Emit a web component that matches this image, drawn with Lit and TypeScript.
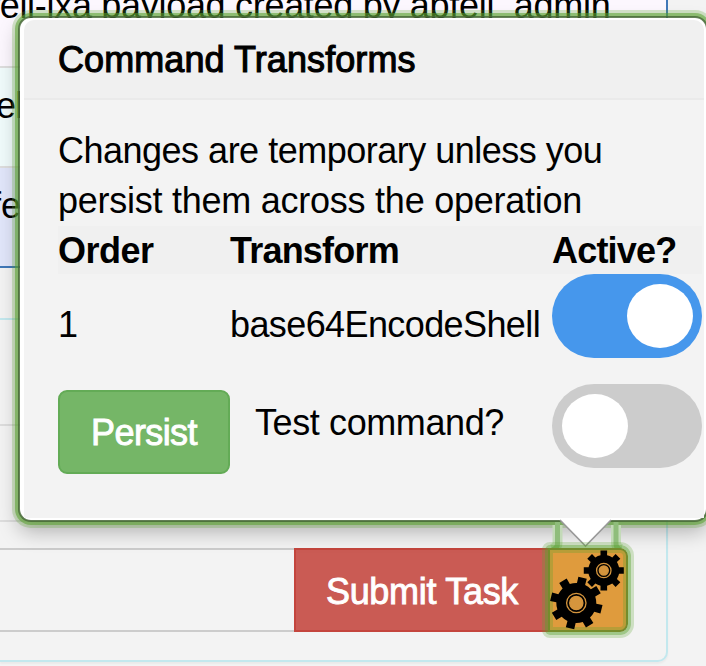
import { LitElement, html, css, svg } from "lit";
import { customElement, property } from "lit/decorators.js";

function gearPath(cx: number, cy: number, outer: number, root: number, teeth: number, start: number): string {
  const step = (Math.PI * 2) / teeth;
  const pt = (r: number, a: number) => `${(cx + r * Math.cos(a)).toFixed(2)} ${(cy + r * Math.sin(a)).toFixed(2)}`;
  let d = "";
  for (let i = 0; i < teeth; i++) {
    const a = (start * Math.PI) / 180 + i * step;
    d += `${i ? "L" : "M"}${pt(root, a - step * 0.27)}L${pt(outer, a - step * 0.21)}L${pt(outer, a + step * 0.21)}L${pt(root, a + step * 0.27)}`;
    d += `A${root} ${root} 0 0 1 ${pt(root, a + step * 0.73)}`;
  }
  return d + "Z";
}

@customElement("toggle-switch")
class ToggleSwitch extends LitElement {
  @property({ type: Boolean, reflect: true }) on = false;
  static styles = css`
    :host { display: flex; box-sizing: border-box; width: 150px; height: 84px; border-radius: 42px; background: #ccc; padding: 10px; }
    :host([on]) { background: #4697ec; justify-content: flex-end; padding-right: 9px; }
    .knob { width: 66px; height: 64px; border-radius: 50%; background: #fff; }
  `;
  render() { return html`<div class="knob"></div>`; }
}

@customElement("transforms-popover")
class TransformsPopover extends LitElement {
  static styles = css`
    :host { display: block; box-sizing: border-box; width: 690px; height: 506px; border: 2px solid rgba(70, 104, 54, .82); border-radius: 13px; background: #fff; background-clip: padding-box; padding: 2px 2px 2px 4px; font-size: 36px; line-height: 50px;
      box-shadow: 0 0 0 3px rgba(90, 163, 47, .55), 0 0 0 6px rgba(90, 163, 47, .25), 0 10px 20px rgba(0, 0, 0, .27); }
    .title { box-sizing: border-box; height: 80px; margin: 0; padding: 15px 34px; background: #f0f0f0; border-bottom: 2px solid #eaeaea; border-radius: 10px 10px 0 0; font-size: 36px; font-weight: 400; letter-spacing: .08px; -webkit-text-stroke: 1.1px #000; white-space: nowrap; }
    .body { box-sizing: border-box; height: 418px; padding: 26px 0 0 34px; background: #f3f3f3; }
    .line { white-space: nowrap; letter-spacing: -.5px; }
    .line.second { letter-spacing: -.25px; }
    .grid, .actions { display: grid; grid-template-columns: 172px 322px 150px; }
    .head { display: contents; font-weight: 700; letter-spacing: -.8px; }
    .head span { background: #f0f0f0; height: 48px; }
    .head span:first-child { letter-spacing: -.5px; }
    .cell { padding-top: 26px; letter-spacing: -.6px; }
    .actions { margin-top: 26px; }
    .persist { box-sizing: border-box; margin-top: 6px; height: 84px; border: 2px solid #63ab56; border-radius: 9px; background: #75b667; color: #fff; text-align: center; line-height: 82px; letter-spacing: -.6px; -webkit-text-stroke: .9px #fff; }
    .test { padding: 14px 0 0 25px; white-space: nowrap; letter-spacing: -.4px; }
  `;
  render() {
    return html`
      <h3 class="title"><span>Command Transforms</span></h3>
      <div class="body">
        <div class="line">Changes are temporary unless you</div>
        <div class="line second">persist them across the operation</div>
        <div class="grid">
          <div class="head"><span>Order</span><span>Transform</span><span>Active?</span></div>
          <div class="cell">1</div><div class="cell">base64EncodeShell</div><toggle-switch on></toggle-switch>
        </div>
        <div class="actions">
          <div class="persist">Persist</div><div class="test">Test command?</div><toggle-switch></toggle-switch>
        </div>
      </div>`;
  }
}

@customElement("app-root")
class AppRoot extends LitElement {
  static styles = css`
    :host { display: block; position: relative; width: 706px; height: 666px; overflow: hidden; background: #f3f3f3; color: #000; font-family: "Liberation Sans", Arial, sans-serif; font-size: 36px; line-height: 50px; }
    .page { display: flex; flex-direction: column; width: 668px; }
    .row { box-sizing: border-box; border-right: 2px solid #4078b8; border-bottom: 2px solid #ddd; white-space: nowrap; overflow: hidden; }
    .r1 { height: 68px; background: #fcf7fe; }
    .r2 { height: 100px; background: #f0fbfb; }
    .r3 { height: 100px; background: #e1e6fa; border-bottom-color: #4078b8; }
    .r1 div { margin: -19px 0 0 -10px; letter-spacing: -.3px; }
    .r2 div { margin: 13px 0 0 -4px; letter-spacing: -.8px; }
    .r3 div { margin: 13px 0 0 -9px; }
    .panel { box-sizing: border-box; height: 344px; margin-top: 50px; border: 2px solid #c3e8ee; border-left: 0; border-radius: 0 0 10px 0; box-shadow: 0 2px 2px rgba(0, 0, 0, .04); }
    .strip { box-sizing: border-box; height: 106px; border-bottom: 2px solid #ddd; }
    .strip.second { height: 96px; }
    .task { display: flex; height: 84px; margin-top: 26px; }
    .input { box-sizing: border-box; width: 294px; border: 2px solid #ccc; border-width: 2px 0; }
    .submit { box-sizing: border-box; width: 254px; border: 2px solid #c4453d; border-right: 0; background: #ca5b54; color: #fff; line-height: 84px; text-align: center; letter-spacing: -.3px; -webkit-text-stroke: .9px #fff; }
    .gears { box-sizing: border-box; width: 80px; border: 2px solid #758c2c; border-radius: 0 8px 8px 0; background: #df9b3d; box-shadow: inset 0 0 0 3px rgba(110, 160, 50, .35); position: relative; z-index: 5; }
    .gears::before, .gears::after { content: ""; position: absolute; inset: -5px; border: 3px solid rgba(90, 163, 47, .55); border-radius: 5px 11px 11px 5px; }
    .gears::after { inset: -8px; border-color: rgba(90, 163, 47, .25); border-radius: 8px 14px 14px 8px; }
    .gears svg { display: block; width: 76px; height: 80px; }
    transforms-popover { position: absolute; left: 18px; top: 16px; z-index: 2; }
    .arrow { position: absolute; left: 540px; top: 518px; width: 92px; height: 34px; z-index: 4; }
  `;
  render() {
    return html`
      <div class="page">
        <div class="row r1"><div>fell-lxa payload created by apfell_admin</div></div>
        <div class="row r2"><div>ell</div></div>
        <div class="row r3"><div>fe</div></div>
        <div class="panel">
          <div class="strip"></div>
          <div class="strip second"></div>
          <div class="task">
            <div class="input"></div>
            <div class="submit">Submit Task</div>
            <div class="gears">
              <svg viewBox="550 550 76 80">
                ${svg`<path d=${gearPath(603.8, 570.5, 20.3, 15.6, 8, 0)} /><path d=${gearPath(576.3, 603, 26.3, 20, 8, 14)} />`}
                <g fill="none" stroke="#d5953d" stroke-width="1.3">
                  <circle cx="603.8" cy="570.5" r="7.2" /><circle cx="603.8" cy="570.5" r="4.5" fill="#d5953d" />
                  <circle cx="576.3" cy="603" r="9.7" /><circle cx="576.3" cy="603" r="6.6" fill="#d5953d" />
                </g>
              </svg>
            </div>
          </div>
        </div>
      </div>
      <transforms-popover></transforms-popover>
      <svg class="arrow" viewBox="540 518 92 34">
        <g fill="none">
          <path d="M557.5 525V543Q557.5 547 552 549M616 525V543Q616 547 621 549" stroke="#c3dab8" stroke-width="10" />
          <path d="M557.5 522V544Q557.5 548 552 550M616 522V544Q616 548 621 550" stroke="#8fbd7b" stroke-width="5" />
        </g>
        <path d="M560 520H611L585.5 546Z" fill="#fff" />
        <path d="M560 520L585.5 546L611 520" fill="none" stroke="#999" stroke-width="1.6" />
      </svg>`;
  }
}
